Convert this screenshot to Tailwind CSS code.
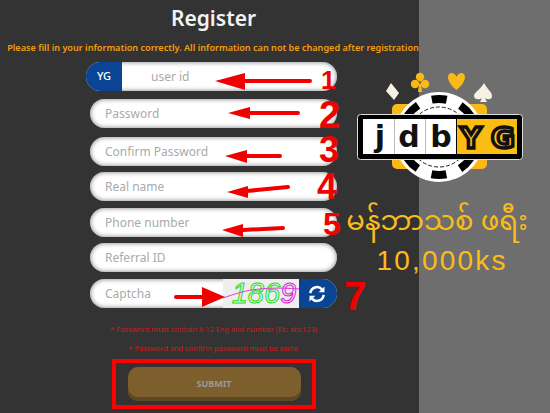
<!DOCTYPE html>
<html lang="en">
<head>
    <meta charset="UTF-8">
    <title>Register</title>
    <script src="https://cdn.jsdelivr.net/npm/@tailwindcss/browser@4"></script>
</head>
<body class="bg-[#6e6e6e] font-['Noto_Sans',sans-serif]">
<div class="relative w-[550px] h-[413px] overflow-hidden flex">

    <!-- register form -->
    <div class="w-[419px] h-full bg-[#333333] flex flex-col items-center">
        <h1 class="mt-[2px] h-[33px] leading-[33px] text-[21px] font-semibold text-[#f2f2f2] pl-[8px]">Register</h1>
        <p class="mt-[3px] pl-[7px] h-[20px] leading-[20px] text-[9.1px] font-semibold text-[#f59e0b] whitespace-nowrap">Please fill in your information correctly. All information can not be changed after registration</p>

        <div class="mt-[4px] w-[251px] ml-[4px] h-[29px] rounded-full bg-white overflow-hidden flex items-center shadow-[inset_0_0_5px_#777]">
            <div class="w-[36px] h-full bg-[#0a4595] text-white text-[11px] font-medium flex items-center justify-center">YG</div>
            <span class="ml-[29px] text-[12px] text-[#aaaaaa]">user id</span>
        </div>

        <div class="mt-[8px] ml-[8px] w-[247px] flex flex-col gap-[7px]">
            <div class="h-[29px] rounded-full bg-white pl-[15px] flex items-center text-[12px] text-[#aaaaaa] shadow-[inset_0_0_5px_#777]">Password</div>
            <div class="mt-[2px] h-[29px] rounded-full bg-white pl-[15px] flex items-center text-[12px] text-[#aaaaaa] shadow-[inset_0_0_5px_#777]">Confirm Password</div>
            <div class="-mt-[1px] h-[29px] rounded-full bg-white pl-[15px] flex items-center text-[12px] text-[#aaaaaa] shadow-[inset_0_0_5px_#777]">Real name</div>
            <div class="h-[29px] rounded-full bg-white pl-[15px] flex items-center text-[12px] text-[#aaaaaa] shadow-[inset_0_0_5px_#777]">Phone number</div>
            <div class="-mt-[1px] h-[29px] rounded-full bg-white pl-[15px] flex items-center text-[12px] text-[#aaaaaa] shadow-[inset_0_0_5px_#777]">Referral ID</div>
            <div class="h-[29px] rounded-full bg-white flex items-center text-[12px] text-[#aaaaaa] shadow-[inset_0_0_5px_#777]">
                <span class="pl-[15px] flex-1">Captcha</span>
                <div class="relative w-[76px] h-full bg-[#eeeeee] flex items-center justify-center gap-[3px] pl-[6px] italic text-[29px] font-['Liberation_Sans',sans-serif]">
                    <span class="text-transparent [-webkit-text-stroke:1px_#22e022]">1</span><span class="-ml-[3px] text-transparent [-webkit-text-stroke:1px_#22e022]">8</span><span class="-ml-[3px] text-transparent [-webkit-text-stroke:1px_#22e022]">6</span><span class="-ml-[3px] text-transparent [-webkit-text-stroke:1px_#dd22dd]">9</span>
                    <svg class="absolute inset-0" width="76" height="29" viewBox="0 0 76 29" fill="none">
                        <path d="M0 19 C 20 12, 36 7, 76 10" stroke="#e23be2" stroke-width="1"/>
                    </svg>
                </div>
                <div class="w-[38px] h-full rounded-r-full bg-[#0a4595] flex items-center justify-center pr-[3px]">
                    <svg width="20" height="20" viewBox="0 0 24 24" fill="none" stroke="white" stroke-width="3">
                        <path d="M4 11 A8 8 0 0 1 18 6.5"/>
                        <path d="M20 13 A8 8 0 0 1 6 17.5"/>
                        <path d="M21 3 V10 H14 Z" fill="white" stroke="none"/>
                        <path d="M3 21 V14 H10 Z" fill="white" stroke="none"/>
                    </svg>
                </div>
            </div>
        </div>

        <p class="mt-[15px] ml-[8px] h-[12px] leading-[12px] text-[7.4px] text-[#d81414]">* Password must contain 8-12 Eng and number (Ex: abc123)</p>
        <p class="mt-[7px] ml-[8px] h-[12px] leading-[12px] text-[7.4px] text-[#d81414]">* Password and confirm password must be same</p>

        <div class="mt-[5px] ml-[9px] w-[204px] h-[50px] border-[4px] border-[#ff0000] flex items-center justify-center">
            <button class="w-[173px] h-[34px] rounded-[10px] bg-[#7d5f2d] shadow-[inset_0_-4px_0_#5f4722] text-[9px] font-bold text-[#9a9a9a]">SUBMIT</button>
        </div>
    </div>

    <!-- logo, sits over the panel edge -->
    <svg class="absolute left-[350px] top-[60px]" width="200" height="130" viewBox="350 60 200 130">
        <path d="M391 83 L399 93 L394 100 L386 91 Z" fill="#f7f3e4"/>
        <g fill="#fbb917">
            <circle cx="420" cy="77" r="4.200"/><circle cx="415" cy="84" r="4.200"/><circle cx="425" cy="84" r="4.200"/>
            <path d="M419 84 H421 L422 92 H418 Z"/>
            <path d="M456.500 90 C 447 83, 446 74, 451 73 C 454 73, 456 75, 456.500 77 C 457 75, 459 73, 462 73 C 467 74, 466 83, 456.500 90 Z"/>
        </g>
        <path d="M484 83 C 480 90, 474 92, 474 96 C 474 100, 480 100, 482 98 L480 102 H487 L485 98 C 488 100, 492 100, 492 96 C 492 92, 488 90, 484 83 Z" fill="#f7f3e4"/>
        <rect x="392" y="104" width="95" height="65" rx="5" fill="#fbb917"/>
        <circle cx="439" cy="137" r="45" fill="white"/>
        <circle cx="439" cy="137" r="38" fill="none" stroke="black" stroke-width="8" stroke-dasharray="14.92 14.92" stroke-dashoffset="7.46"/>
        <circle cx="439" cy="137" r="30" fill="none" stroke="#222" stroke-width="1" stroke-dasharray="4 2"/>
        <rect x="357.500" y="114.500" width="165" height="45" rx="3" fill="black" stroke="#dddddd"/>
        <rect x="363" y="119" width="93" height="35" fill="white"/>
        <rect x="457" y="119" width="60" height="35" fill="#fbbc14"/>
        <path d="M394.500 119 V154 M425.500 119 V154" stroke="#bbbbbb"/>
        <g font-family="'DejaVu Sans', sans-serif" font-weight="700" font-size="30" text-anchor="middle" fill="#111111">
            <text x="380" y="147">j</text>
            <text x="409" y="147">d</text>
            <text x="441" y="147">b</text>
        </g>
        <g font-family="'DejaVu Sans', sans-serif" font-weight="700" font-size="29" text-anchor="middle" fill="#fbbc14" stroke="#111111" stroke-width="3.500">
            <text x="471" y="148">Y</text>
            <text x="503" y="148">G</text>
        </g>
    </svg>

    <!-- promo text -->
    <div class="absolute left-[336px] top-[204px] w-[212px] text-center text-[#fbbc1a]">
        <p class="pr-[10px] h-[40px] leading-[40px] text-[27.5px] font-['Noto_Sans_Myanmar','Noto_Sans',sans-serif] whitespace-nowrap">မန်ဘာသစ် ဖရီး</p>
        <p class="mt-[2px] h-[30px] leading-[30px] text-[28px] font-['Liberation_Sans',sans-serif] tracking-[2.2px]">10,000ks</p>
    </div>

    <!-- red marker arrows drawn over the form -->
    <svg class="absolute left-0 top-0 pointer-events-none" width="419" height="413" viewBox="0 0 419 413" fill="#f00000" stroke="none">
        <g stroke="#f00000" stroke-width="4" stroke-linecap="round" fill="none">
            <path d="M244 81 H310"/>
            <path d="M250 113 H298"/>
            <path d="M246 156 H280"/>
            <path d="M247 191 L288 187"/>
            <path d="M243 230 L283 228"/>
            <path d="M176 297 H204"/>
        </g>
        <path d="M215 81 L245 73 V90 Z"/>
        <path d="M228 113 L250 107 V119 Z"/>
        <path d="M225 156 L247 150 V163 Z"/>
        <path d="M227 192 L248 186 V198 Z"/>
        <path d="M222 230 L243 224 V237 Z"/>
        <path d="M225 297 L202 287 V307 Z"/>
    </svg>

    <!-- handwritten step numbers -->
    <span class="absolute left-[321px] top-[65px] text-[26px] leading-[30px] font-bold text-[#f00000] font-['Liberation_Sans',sans-serif]">1</span>
    <span class="absolute left-[319px] top-[99px] text-[38px] leading-[32px] font-bold text-[#f00000] font-['Liberation_Sans',sans-serif]">2</span>
    <span class="absolute left-[319px] top-[135px] text-[36px] leading-[30px] font-bold text-[#f00000] font-['Liberation_Sans',sans-serif]">3</span>
    <span class="absolute left-[317px] top-[172px] text-[36px] leading-[30px] font-bold text-[#f00000] font-['Liberation_Sans',sans-serif]">4</span>
    <span class="absolute left-[323px] top-[210px] text-[32px] leading-[28px] font-bold text-[#f00000] font-['Liberation_Sans',sans-serif]">5</span>
    <span class="absolute left-[344px] top-[276px] text-[40px] leading-[40px] font-bold text-[#f00000] font-['Liberation_Sans',sans-serif]">7</span>
</div>
</body>
</html>
